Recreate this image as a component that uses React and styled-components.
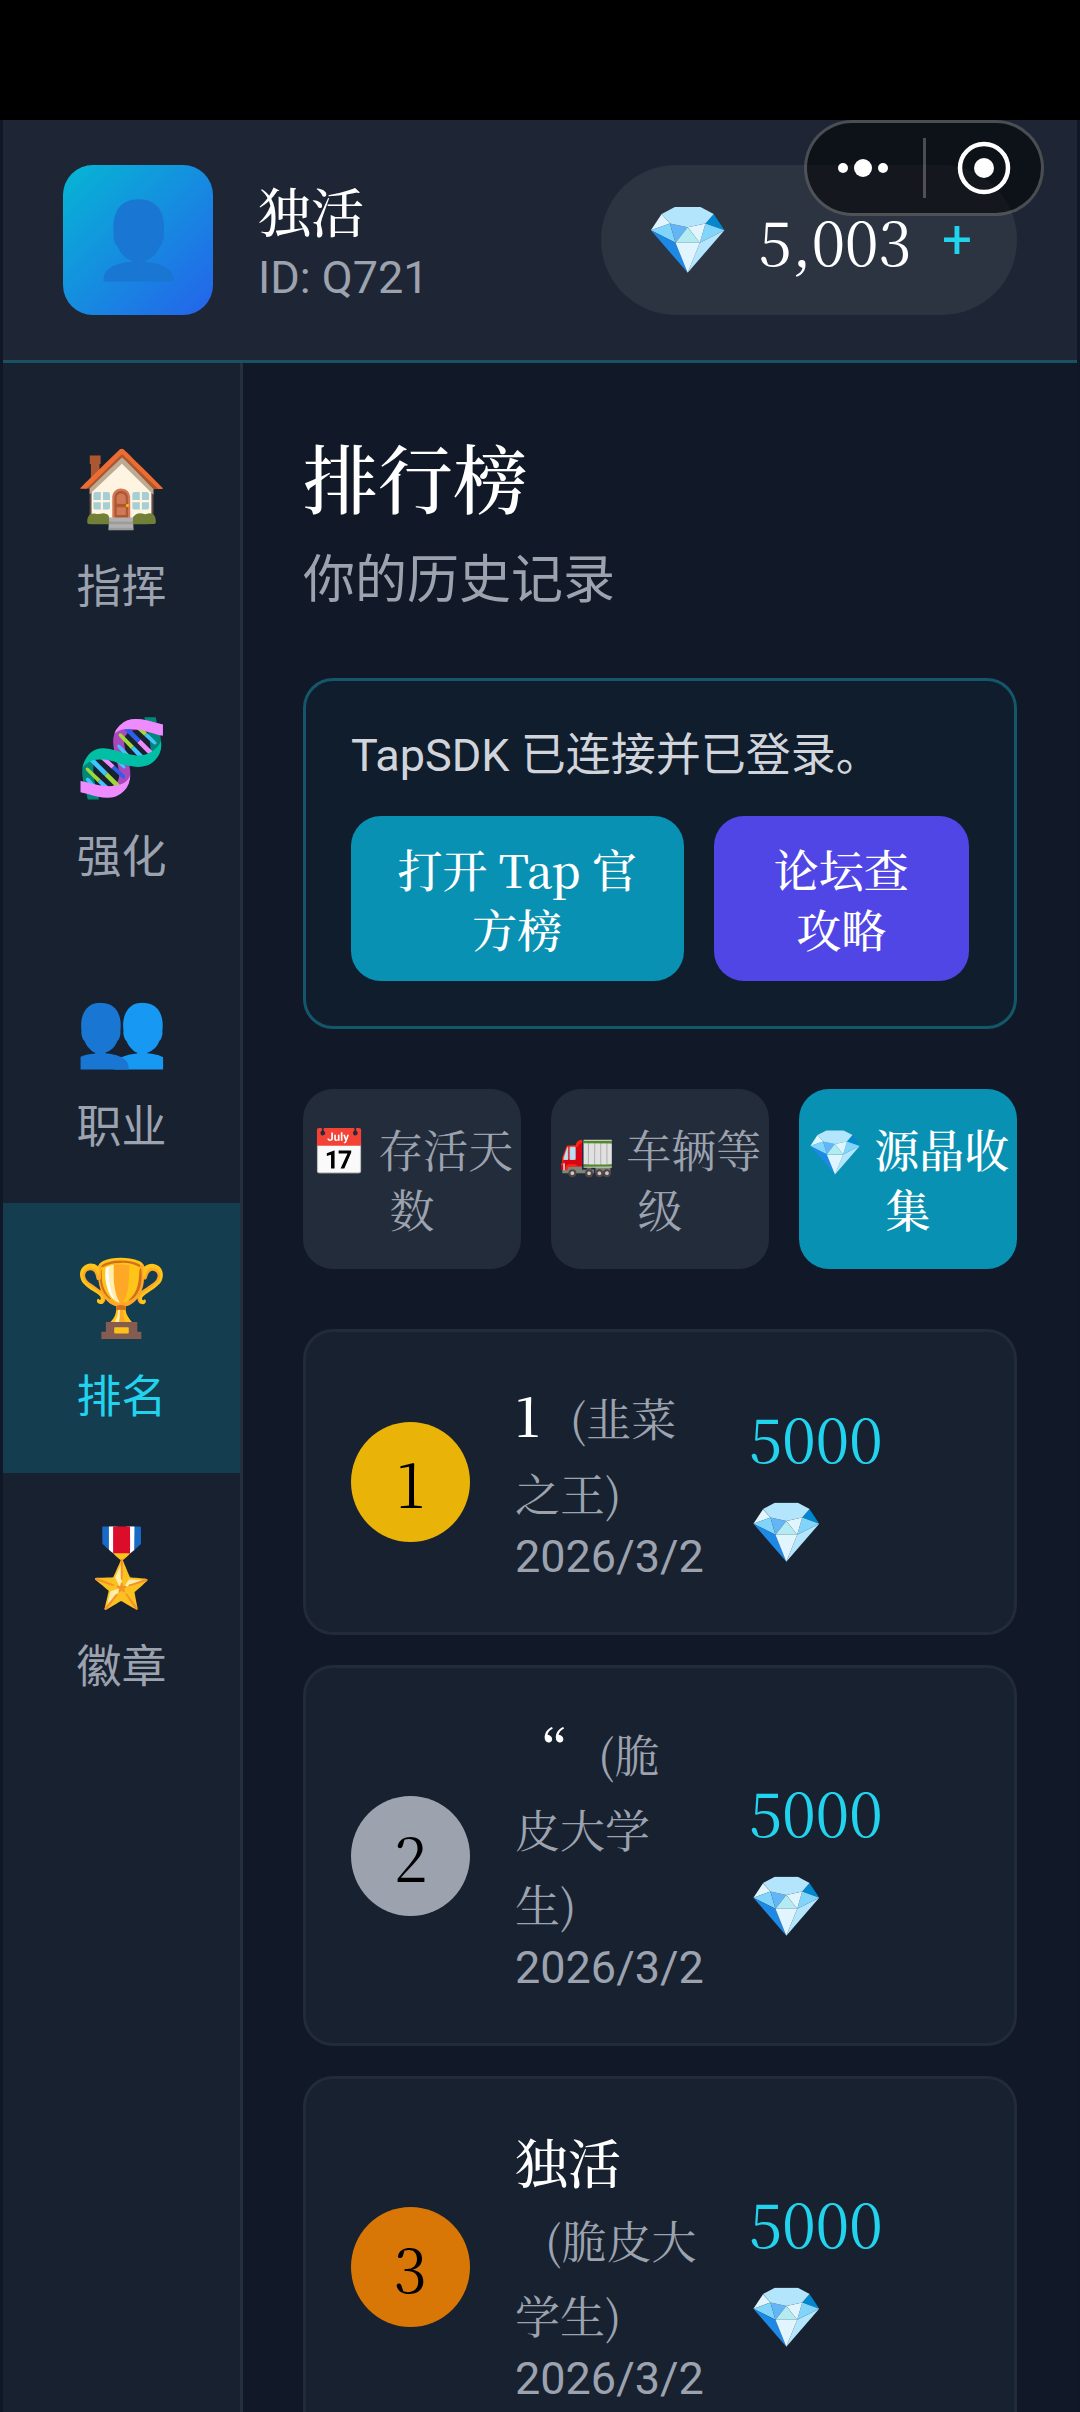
import React, { useState } from 'react'
import styled, { createGlobalStyle } from 'styled-components'

const serif = `'Noto Serif CJK SC', 'Noto Serif SC', 'Liberation Serif', 'Noto Sans CJK SC', serif`
const sans = `Roboto, 'Noto Sans CJK SC', sans-serif`

const GlobalStyle = createGlobalStyle`
  * {
    box-sizing: border-box;
  }
  body {
    margin: 0;
    background: #000;
    font-family: ${sans};
    color: #fff;
  }
  h1, p, ol {
    margin: 0;
    padding: 0;
  }
  button {
    font: inherit;
    color: inherit;
    border: 0;
    padding: 0;
    background: none;
    cursor: pointer;
  }
`

const Screen = styled.div`
  height: 100vh;
  padding-top: 120px;
  overflow: hidden;
`

const Game = styled.div`
  position: relative;
  height: 100%;
  display: flex;
  flex-direction: column;
  background: #111827;
  border: solid #101827;
  border-width: 0 3px;
`

const Header = styled.header`
  display: flex;
  align-items: center;
  gap: 45px;
  padding: 45px 60px;
  background: #1e2635;
  border-bottom: 3px solid #1a5163;
`

const Avatar = styled.div`
  display: flex;
  align-items: center;
  justify-content: center;
  width: 150px;
  height: 150px;
  border-radius: 30px;
  background: linear-gradient(135deg, #06b6d4, #2563eb);
  font-size: 75px;
  line-height: 90px;
`

const Player = styled.div`
  flex: 1;
`

const PlayerName = styled.p`
  font-family: ${serif};
  font-size: 53px;
  font-weight: 500;
  line-height: 75px;
`

const PlayerId = styled.p`
  font-size: 45px;
  line-height: 60px;
  color: #9ca3af;
`

const Wallet = styled.div`
  display: flex;
  align-items: center;
  height: 150px;
  padding: 0 45px;
  border-radius: 75px;
  background: #2c3442;
  gap: 30px;
`

const WalletGem = styled.span`
  font-size: 67px;
  line-height: 90px;
`

const Balance = styled.span`
  font-family: ${serif};
  font-size: 60px;
  line-height: 90px;
`

const AddButton = styled.button`
  font-size: 53px;
  line-height: 60px;
  color: #22d3ee;
`

const Capsule = styled.div`
  position: absolute;
  top: 0;
  right: 33px;
  display: flex;
  align-items: center;
  width: 240px;
  height: 96px;
  border: 3px solid rgba(255, 255, 255, 0.25);
  border-radius: 48px;
  background: rgba(0, 0, 0, 0.54);
`

const CapsuleButton = styled.button`
  display: flex;
  flex: 1;
  align-items: center;
  justify-content: center;
  height: 60px;

  & + & {
    border-left: 3px solid rgba(255, 255, 255, 0.25);
  }
`

const Body = styled.div`
  display: flex;
  flex: 1;
  min-height: 0;
`

const Sidebar = styled.nav`
  flex: none;
  width: 240px;
  padding-top: 30px;
  background: #182130;
  border-right: 3px solid #25303e;
`

const NavItem = styled.button`
  display: flex;
  flex-direction: column;
  align-items: center;
  justify-content: center;
  gap: 20px;
  width: 100%;
  height: 270px;
  font-size: 45px;
  line-height: 60px;
  color: ${p => (p.$active ? '#22d3ee' : '#9ca3af')};
  background: ${p => (p.$active ? '#153d50' : 'transparent')};
`

const NavIcon = styled.span`
  font-size: 75px;
  line-height: 100px;
`

const Main = styled.main`
  flex: 1;
  min-width: 0;
  padding: 60px;
  overflow: hidden;
`

const Title = styled.h1`
  margin-bottom: 15px;
  font-family: ${serif};
  font-size: 75px;
  font-weight: 500;
  line-height: 105px;
`

const Subtitle = styled.p`
  margin-bottom: 60px;
  font-size: 52px;
  line-height: 75px;
  color: #9ca3af;
`

const SdkPanel = styled.section`
  padding: 45px;
  border: 3px solid #14566a;
  border-radius: 30px;
  background: #101d2c;
  font-size: 45px;
  line-height: 60px;
  color: #d1d5db;
`

const SdkActions = styled.div`
  display: flex;
  gap: 30px;
  margin-top: 30px;
`

const ActionButton = styled.button`
  padding: 23px 45px 22px;
  border-radius: 30px;
  background: ${p => p.$color};
  font-family: ${serif};
  font-weight: 500;
  color: #fff;
`

const Tabs = styled.div`
  display: grid;
  grid-template-columns: repeat(3, 1fr);
  gap: 30px;
  margin: 60px 0;
`

const Tab = styled.button`
  padding: 30px 0;
  border-radius: 30px;
  font-family: ${serif};
  font-size: 45px;
  font-weight: ${p => (p.$active ? 500 : 400)};
  line-height: 60px;
  color: ${p => (p.$active ? '#fff' : '#9ca3af')};
  background: ${p => (p.$active ? '#0891b2' : '#232c3b')};
`

const RankList = styled.ol`
  display: flex;
  flex-direction: column;
  gap: 30px;
  list-style: none;
`

const RankCard = styled.li`
  display: grid;
  grid-template-columns: 119px 187fr 222fr;
  align-items: center;
  column-gap: 45px;
  padding: 45px;
  border: 3px solid #212b39;
  border-radius: 30px;
  background: #182130;
`

const Medal = styled.span`
  border-radius: 50%;
  background: ${p => p.$color};
  font-family: ${serif};
  font-size: 60px;
  line-height: 120px;
  text-align: center;
  color: #000;
`

const RankName = styled.p`
  font-family: ${serif};
  font-size: 53px;
  font-weight: 500;
  line-height: 75px;
`

const Role = styled.span`
  margin-left: 30px;
  font-size: 45px;
  font-weight: 400;
  line-height: 60px;
  color: #9ca3af;
`

const RankDate = styled.p`
  font-size: 45px;
  line-height: 60px;
  color: #9ca3af;
`

const Score = styled.p`
  font-family: ${serif};
  font-size: 60px;
  line-height: 90px;
  color: #22d3ee;
`

const ScoreGem = styled.span`
  display: block;
`

const navItems = [
  { icon: '🏠', label: '指挥' },
  { icon: '🧬', label: '强化' },
  { icon: '👥', label: '职业' },
  { icon: '🏆', label: '排名' },
  { icon: '🎖️', label: '徽章' },
]

const tabs = [
  { icon: '📅', label: '存活天数' },
  { icon: '🚛', label: '车辆等级' },
  { icon: '💎', label: '源晶收集' },
]

const ranks = [
  { name: '1', role: '韭菜之王', date: '2026/3/2', score: 5000, color: '#eab308' },
  { name: '“', role: '脆皮大学生', date: '2026/3/2', score: 5000, color: '#9ca3af' },
  { name: '独活', role: '脆皮大学生', date: '2026/3/2', score: 5000, color: '#d97706' },
]

export default function App() {
  const [page, setPage] = useState('排名')
  const [tab, setTab] = useState('源晶收集')

  return (
    <Screen lang="zh-CN">
      <GlobalStyle />
      <Game>
        <Header>
          <Avatar>👤</Avatar>
          <Player>
            <PlayerName>独活</PlayerName>
            <PlayerId>ID: Q721</PlayerId>
          </Player>
          <Wallet>
            <WalletGem>💎</WalletGem>
            <Balance>5,003</Balance>
            <AddButton>+</AddButton>
          </Wallet>
        </Header>
        <Body>
          <Sidebar>
            {navItems.map(item => (
              <NavItem key={item.label} $active={item.label === page} onClick={() => setPage(item.label)}>
                <NavIcon>{item.icon}</NavIcon>
                <span>{item.label}</span>
              </NavItem>
            ))}
          </Sidebar>
          <Main>
            <Title>排行榜</Title>
            <Subtitle>你的历史记录</Subtitle>
            <SdkPanel>
              <p>TapSDK 已连接并已登录。</p>
              <SdkActions>
                <ActionButton $color="#0891b2">打开 Tap 官方榜</ActionButton>
                <ActionButton $color="#4f46e5">论坛查攻略</ActionButton>
              </SdkActions>
            </SdkPanel>
            <Tabs>
              {tabs.map(t => (
                <Tab key={t.label} $active={t.label === tab} onClick={() => setTab(t.label)}>
                  {t.icon} {t.label}
                </Tab>
              ))}
            </Tabs>
            <RankList>
              {ranks.map((r, i) => (
                <RankCard key={i}>
                  <Medal $color={r.color}>{i + 1}</Medal>
                  <div>
                    <RankName>
                      {r.name}
                      <Role>({r.role})</Role>
                    </RankName>
                    <RankDate>{r.date}</RankDate>
                  </div>
                  <Score>
                    {r.score} <ScoreGem>💎</ScoreGem>
                  </Score>
                </RankCard>
              ))}
            </RankList>
          </Main>
        </Body>
        <Capsule>
          <CapsuleButton aria-label="更多">
            <svg width="54" height="20" viewBox="0 0 54 20" fill="#fff">
              <circle cx="5" cy="10" r="5" />
              <circle cx="25" cy="10" r="9" />
              <circle cx="45" cy="10" r="5" />
            </svg>
          </CapsuleButton>
          <CapsuleButton aria-label="关闭">
            <svg width="56" height="54" viewBox="0 0 56 54">
              <circle cx="29" cy="27" r="24" fill="none" stroke="#fff" strokeWidth="4.5" />
              <circle cx="29" cy="27" r="10" fill="#fff" />
            </svg>
          </CapsuleButton>
        </Capsule>
      </Game>
    </Screen>
  )
}
